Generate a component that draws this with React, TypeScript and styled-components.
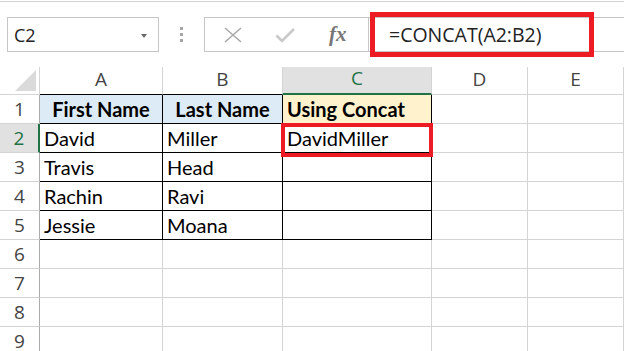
import React from "react";
import styled, { createGlobalStyle } from "styled-components";

const GlobalStyle = createGlobalStyle`
  html, body {
    margin: 0;
    padding: 0;
    background: #ffffff;
  }
  body {
    font-family: "Open Sans", "Liberation Sans", sans-serif;
    overflow: hidden;
  }
`;

const GREEN = "#217346";
const GRID = "#d4d4d4";

const columns = ["A", "B", "C", "D", "E"];
const rows = [
  ["First Name", "Last Name", "Using Concat"],
  ["David", "Miller", "DavidMiller"],
  ["Travis", "Head", ""],
  ["Rachin", "Ravi", ""],
  ["Jessie", "Moana", ""],
];
const TOTAL_ROWS = 9;

export default function App() {
  return (
    <>
      <GlobalStyle />
      <Page>
        <FormulaBar>
          <NameBox>
            <NameText>C2</NameText>
            <DropArrow />
          </NameBox>
          <Grip>
            <Dot />
            <Dot />
            <Dot />
          </Grip>
          <ButtonBox>
            <IconButton>
              <svg width="18" height="16" viewBox="0 0 18 16">
                <path d="M1 1 L17 15 M17 1 L1 15" stroke="#a9a9a9" strokeWidth="1.6" fill="none" />
              </svg>
            </IconButton>
            <IconButton>
              <svg width="20" height="16" viewBox="0 0 20 16">
                <path d="M1.5 8.5 L7 14 L19 2" stroke="#c9c9c9" strokeWidth="2.6" fill="none" />
              </svg>
            </IconButton>
            <Fx>fx</Fx>
          </ButtonBox>
          <FormulaInput>
            <FormulaText>=CONCAT(A2:B2)</FormulaText>
            <RedMark />
          </FormulaInput>
        </FormulaBar>

        <Sheet>
          <Corner>
            <CornerTriangle />
          </Corner>
          {columns.map((c) => (
            <ColHead key={c} $selected={c === "C"} $tableTop={c !== "D" && c !== "E"}>
              {c}
            </ColHead>
          ))}
          {Array.from({ length: TOTAL_ROWS }).map((_, r) => {
            const data = rows[r];
            return (
              <React.Fragment key={r}>
                <RowHead $selected={r === 1}>{r + 1}</RowHead>
                {columns.map((c, ci) => {
                  const inTable = !!data && ci < 3;
                  const value = inTable ? data[ci] : "";
                  const isHeader = r === 0 && inTable;
                  const bg = isHeader ? (ci === 2 ? "#fff2cc" : "#ddebf7") : "#ffffff";
                  return (
                    <Cell
                      key={c}
                      $table={inTable}
                      $bg={bg}
                      $bold={isHeader}
                      $center={isHeader && ci < 2}
                    >
                      {value}
                      {r === 1 && ci === 2 && <CellMark />}
                    </Cell>
                  );
                })}
              </React.Fragment>
            );
          })}
        </Sheet>
      </Page>
    </>
  );
}

const Page = styled.div`
  width: 624px;
  height: 351px;
  overflow: hidden;
  padding-top: 1px;
  box-sizing: border-box;
`;

const FormulaBar = styled.div`
  display: flex;
  align-items: flex-start;
  height: 66px;
  box-sizing: border-box;
  border-top: 1px solid ${GRID};
  padding-top: 15px;
`;

const NameBox = styled.div`
  margin-left: 7px;
  width: 152px;
  height: 35px;
  box-sizing: border-box;
  border: 1px solid #c6c6c6;
  display: flex;
  align-items: center;
  justify-content: space-between;
  padding: 0 11px 0 6px;
`;

const NameText = styled.span`
  font-size: 18px;
  color: #222;
`;

const DropArrow = styled.span`
  width: 0;
  height: 0;
  border-left: 3.5px solid transparent;
  border-right: 3.5px solid transparent;
  border-top: 4px solid #6a6a6a;
  margin-top: 2px;
`;

const Grip = styled.div`
  width: 45px;
  height: 35px;
  display: flex;
  flex-direction: column;
  align-items: center;
  justify-content: center;
  gap: 3px;
`;

const Dot = styled.span`
  width: 3px;
  height: 3px;
  background: #a6a6a6;
`;

const ButtonBox = styled.div`
  width: 165px;
  height: 35px;
  box-sizing: border-box;
  border: 1px solid #c6c6c6;
  display: flex;
  align-items: center;
  padding-left: 18px;
  gap: 32px;
`;

const IconButton = styled.span`
  display: flex;
  align-items: center;
  justify-content: center;
  width: 20px;
  height: 20px;
`;

const Fx = styled.span`
  font-family: "Liberation Serif", "DejaVu Serif", serif;
  font-style: italic;
  font-weight: bold;
  font-size: 21px;
  color: #777;
  margin-left: 2px;
`;

const FormulaInput = styled.div`
  position: relative;
  flex: 1;
  height: 35px;
  box-sizing: border-box;
  border-top: 1px solid #c6c6c6;
  border-bottom: 1px solid #c6c6c6;
  display: flex;
  align-items: center;
  padding-left: 20px;
`;

const FormulaText = styled.span`
  font-size: 19.5px;
  color: #222;
`;

const RedMark = styled.span`
  position: absolute;
  left: 1px;
  top: -6px;
  width: 224px;
  height: 45px;
  box-sizing: border-box;
  border: 5px solid #ed1c24;
`;

const Sheet = styled.div`
  display: grid;
  grid-template-columns: 40px 123px 120px 149px 96px 96px;
  grid-template-rows: 28px repeat(${TOTAL_ROWS}, 29px);
  font-family: "Lato", "Open Sans", sans-serif;
`;

const Corner = styled.div`
  position: relative;
  box-sizing: border-box;
  border-right: 1px solid ${GRID};
  border-bottom: 1px solid ${GRID};
`;

const CornerTriangle = styled.span`
  position: absolute;
  right: 3px;
  bottom: 3px;
  width: 0;
  height: 0;
  border-left: 21px solid transparent;
  border-bottom: 21px solid #dadada;
`;

const ColHead = styled.div<{ $selected?: boolean; $tableTop?: boolean }>`
  box-sizing: border-box;
  display: flex;
  justify-content: center;
  align-items: flex-end;
  padding-bottom: 2px;
  font-family: "Open Sans", sans-serif;
  font-size: 19px;
  color: ${({ $selected }) => ($selected ? GREEN : "#444")};
  background: ${({ $selected }) => ($selected ? "#e1e1e1" : "#fff")};
  border-right: 1px solid ${GRID};
  border-bottom: ${({ $selected, $tableTop }) =>
    $selected ? `2px solid ${GREEN}` : `1px solid ${$tableTop ? "#000" : GRID}`};
`;

const RowHead = styled.div<{ $selected?: boolean }>`
  box-sizing: border-box;
  display: flex;
  justify-content: center;
  align-items: center;
  font-family: "Open Sans", sans-serif;
  font-size: 19px;
  color: ${({ $selected }) => ($selected ? GREEN : "#444")};
  background: ${({ $selected }) => ($selected ? "#e1e1e1" : "#fff")};
  border-bottom: 1px solid ${GRID};
  border-right: ${({ $selected }) => ($selected ? `2px solid ${GREEN}` : "1px solid #ababab")};
`;

const Cell = styled.div<{ $table?: boolean; $bg: string; $bold?: boolean; $center?: boolean }>`
  position: relative;
  box-sizing: border-box;
  padding: 0 4px;
  font-size: 20px;
  line-height: 28px;
  color: #000;
  white-space: nowrap;
  background: ${({ $bg }) => $bg};
  font-weight: ${({ $bold }) => ($bold ? 700 : 400)};
  text-align: ${({ $center }) => ($center ? "center" : "left")};
  border-right: 1px solid ${({ $table }) => ($table ? "#000" : GRID)};
  border-bottom: 1px solid ${({ $table }) => ($table ? "#000" : GRID)};
`;

const CellMark = styled.span`
  position: absolute;
  z-index: 2;
  left: -2px;
  top: -1px;
  width: 152px;
  height: 34px;
  box-sizing: border-box;
  border: 4px solid #ed1c24;
`;
